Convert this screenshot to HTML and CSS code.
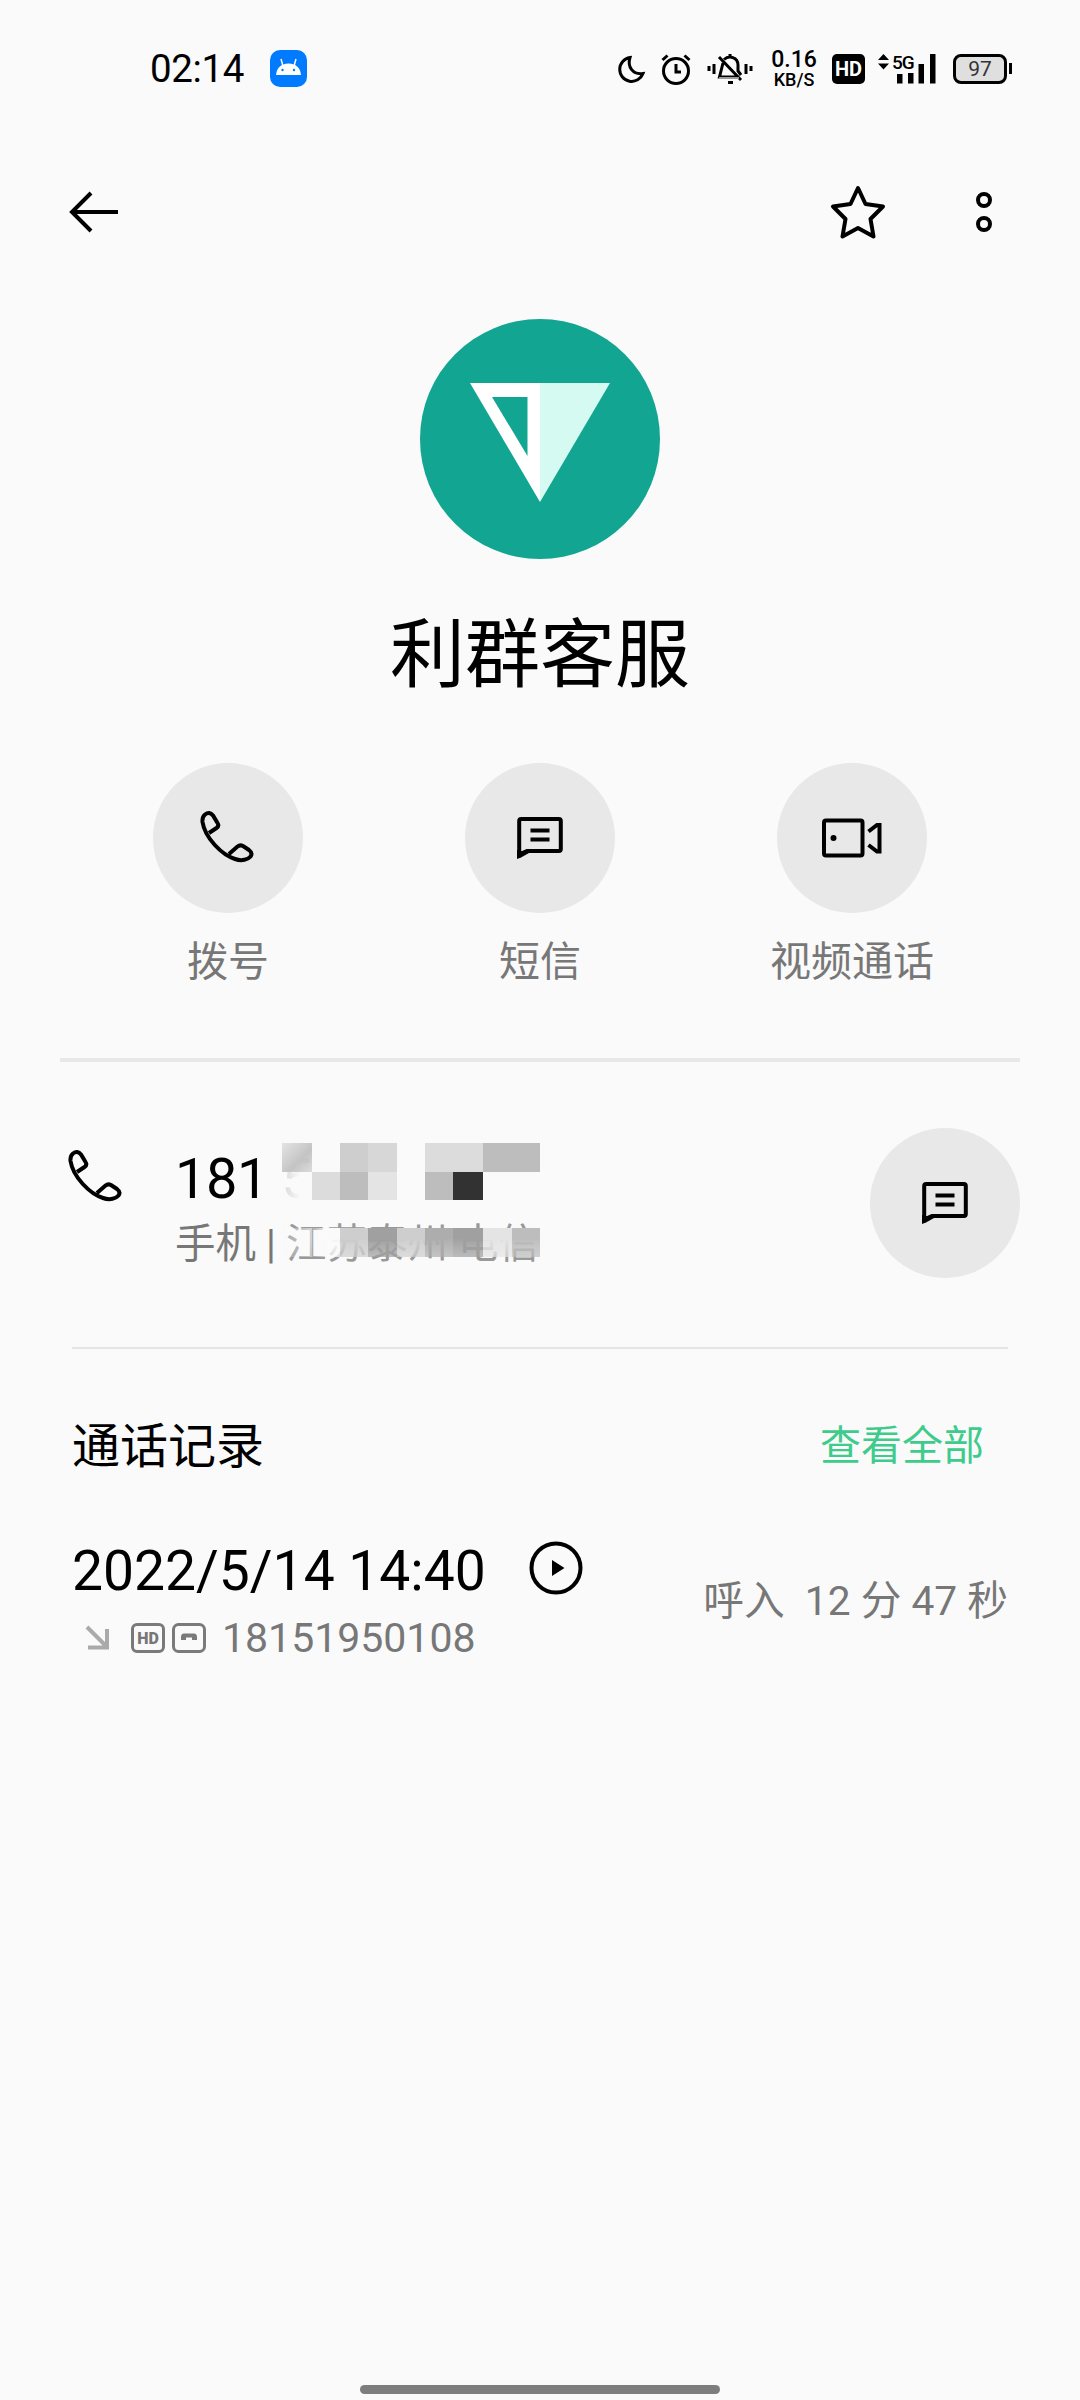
FILE: index.html
```html
<!DOCTYPE html>
<html lang="zh-CN">
<head>
    <meta charset="UTF-8">
    <meta name="viewport" content="width=device-width, initial-scale=1.0">
    <title>利群客服</title>
    <link rel="stylesheet" href="styles.css">
</head>
<body>
    <svg class="symbols">
        <symbol id="phone" viewBox="0 0 56 56">
            <path d="M9 23L16.500 18Q19.500 16 17.500 13L13 5.500Q9.500 1 5 4.500Q2 7 2.500 12C5 28 22 45 35 49C42 51.500 48 49.500 50.500 46.500Q53 43 49 40L43 36Q40 34.500 37.500 36.500L29 44"/>
        </symbol>
        <symbol id="message" viewBox="0 0 46 44">
            <path d="M2.200 38V5Q2.200 3 4.200 3H41.800Q43.800 3 43.800 5V33Q43.800 35 41.800 35H10L2.200 38.500M13.500 14.500H32.500M13.500 23.500H32.500"/>
            <path class="tail" d="M0 34V43L4 41.500L12 37Z"/>
        </symbol>
    </svg>

    <div class="status-bar">
        <span class="time">02:14</span>
        <svg class="app-icon" viewBox="0 0 37 37">
            <rect width="37" height="37" rx="10" fill="#007bff"/>
            <path d="M6 25Q7 14 18.500 13.500Q30 14 31 25Z" fill="#fff"/>
            <path d="M13 16L11 9M24 16L26 9" stroke="#fff" stroke-width="1.500"/>
            <circle cx="12.500" cy="20" r="1.200" fill="#007bff"/>
            <circle cx="24" cy="20" r="1.200" fill="#007bff"/>
        </svg>
        <div class="status-icons">
            <svg class="moon" viewBox="0 0 26 28">
                <path d="M11 2.500A12 12 0 1 0 24 18.500C14 20 8 12 11 2.500Z"/>
            </svg>
            <svg class="alarm" viewBox="0 0 30 32">
                <circle cx="15" cy="18" r="12.500"/>
                <path d="M15 11V19H20M1.500 7L6.500 2.500M28.500 7L23.500 2.500"/>
            </svg>
            <svg class="bell" viewBox="0 0 46 32">
                <path d="M2 13V18M7 11V21M39 11V21M44 13V18"/>
                <path d="M16 10L12.500 24H31M17 6.500C22 2 31 4 31 12V18L34 22M12 4L34 27M23 1V4M21 29.500H26"/>
                <path d="M12 25H32" stroke="#999" stroke-width="2"/>
            </svg>
            <div class="speed">
                <span class="speed-value">0.16</span>
                <span class="speed-unit">KB/S</span>
            </div>
            <span class="hd">HD</span>
            <svg class="signal" viewBox="0 0 58 30">
                <path d="M0 6L5.500 0L11 6ZM0 9.500L5.500 15.500L11 9.500Z"/>
                <text x="14" y="14.500">5G</text>
                <path d="M19 20H24.500V29.500H19ZM30 19H35.500V29.500H30ZM40.500 10H46V29.500H40.500ZM52 0H57.500V29.500H52Z"/>
            </svg>
            <div class="battery">97</div>
        </div>
    </div>

    <div class="toolbar">
        <svg class="back" viewBox="0 0 50 44">
            <path d="M22 3L3 22L22 41M3 22H49"/>
        </svg>
        <svg class="star" viewBox="0 0 56 56">
            <path d="M28 4L35.500 20L53 22.500L40.500 35L43.500 52.500L28 44L12.500 52.500L15.500 35L3 22.500L20.500 20Z"/>
        </svg>
        <svg class="more" viewBox="0 0 16 42">
            <circle cx="8" cy="9" r="6"/>
            <circle cx="8" cy="33" r="6"/>
        </svg>
    </div>

    <div class="profile">
        <svg class="avatar" viewBox="0 0 240 240">
            <circle cx="120" cy="120" r="120" fill="#12a591"/>
            <path d="M50 64H120V183Z" fill="#fff"/>
            <path d="M120 64H190L120 183Z" fill="#d5faf2"/>
            <path d="M72 78H107.500V137Z" fill="#12a591"/>
        </svg>
        <h1>利群客服</h1>
    </div>

    <div class="actions">
        <div class="action">
            <div class="circle"><svg class="icon-phone"><use href="#phone"/></svg></div>
            <span>拨号</span>
        </div>
        <div class="action">
            <div class="circle"><svg class="icon-message"><use href="#message"/></svg></div>
            <span>短信</span>
        </div>
        <div class="action">
            <div class="circle">
                <svg class="icon-video" viewBox="0 0 62 40">
                    <rect x="3" y="2.500" width="38.500" height="35" rx="2"/>
                    <path d="M47.500 13.500L56 7H58.500V33.500H56L47.500 27"/>
                    <circle class="dot" cx="12.500" cy="20" r="3"/>
                </svg>
            </div>
            <span>视频通话</span>
        </div>
    </div>

    <div class="number-row">
        <svg class="icon-phone"><use href="#phone"/></svg>
        <div class="number">
            <p class="digits">181 <span class="faint">5</span></p>
            <p class="place">手机 | <span class="fade">江苏泰州 电信</span></p>
            <div class="mosaic">
                <i class="t1"></i><i></i><i class="t2"></i><i class="t3"></i><i></i><i class="t4"></i><i class="t4"></i><i class="t5"></i><i class="t5"></i>
                <i class="t0"></i><i class="t4"></i><i class="t5"></i><i class="t6"></i><i></i><i class="t5"></i><i class="t7"></i><i></i><i></i>
            </div>
            <div class="mosaic low">
                <i class="t0"></i><i class="t0"></i><i class="t2"></i><i class="t8"></i><i class="t2"></i><i class="t9"></i><i class="t8"></i><i class="t6"></i><i class="t5"></i>
            </div>
        </div>
        <div class="circle"><svg class="icon-message"><use href="#message"/></svg></div>
    </div>

    <div class="history">
        <div class="history-head">
            <h2>通话记录</h2>
            <a>查看全部</a>
        </div>
        <div class="call">
            <div class="call-info">
                <div class="call-date">
                    <span>2022/5/14 14:40</span>
                    <svg class="play" viewBox="0 0 54 54">
                        <circle cx="27" cy="27" r="24.500"/>
                        <path d="M23 19L35.500 27L23 35Z"/>
                    </svg>
                </div>
                <div class="call-detail">
                    <svg class="incoming" viewBox="0 0 24 24">
                        <path d="M1 1L21 21M21 3V21.500H2"/>
                    </svg>
                    <span class="tag">HD</span>
                    <svg class="record" viewBox="0 0 34 30">
                        <rect x="1.500" y="1.500" width="31" height="27" rx="5"/>
                        <path class="fill" d="M9 17V14Q9 10.500 12 10.500H22Q25 10.500 25 14V17H20V14.500H14V17Z"/>
                    </svg>
                    <span>18151950108</span>
                </div>
            </div>
            <span class="duration">呼入  12 分 47 秒</span>
        </div>
    </div>

    <div class="home-bar"></div>
</body>
</html>
```
FILE: styles.css
```css
* {
    box-sizing: border-box;
}
body {
    margin: 0;
    width: 1080px;
    height: 2400px;
    display: flex;
    flex-direction: column;
    background: #fafafa;
    color: #000;
    font-family: Roboto, "Noto Sans CJK SC", sans-serif;
    overflow: hidden;
}
h1, h2, p {
    margin: 0;
    font-weight: 400;
}
svg {
    display: block;
    flex: none;
    fill: none;
    stroke: #000;
    stroke-width: 4;
    overflow: visible;
}
.symbols {
    position: absolute;
    width: 0;
    height: 0;
}
.tail {
    fill: #000;
    stroke: none;
}

/* status bar */
.status-bar {
    height: 137px;
    padding: 0 68px 0 150px;
    display: flex;
    align-items: center;
}
.time {
    width: 120px;
    font-size: 38.500px;
    letter-spacing: -0.4px;
}
.app-icon {
    width: 37px;
    height: 37px;
    stroke: none;
}
.status-icons {
    margin-left: auto;
    display: flex;
    align-items: center;
}
.moon {
    width: 26px;
    height: 28px;
    margin-right: 16px;
    stroke-width: 3;
}
.alarm {
    width: 30px;
    height: 32px;
    margin-right: 16px;
    stroke-width: 3;
}
.bell {
    width: 46px;
    height: 32px;
    margin-right: 18px;
    stroke-width: 3;
}
.speed {
    width: 46px;
    margin-right: 15px;
    display: flex;
    flex-direction: column;
    align-items: center;
    font-family: Roboto, sans-serif;
    font-weight: 500;
    white-space: nowrap;
}
.speed-value {
    font-size: 23px;
    line-height: 21px;
}
.speed-unit {
    font-size: 18px;
    line-height: 19px;
}
.hd {
    width: 33px;
    height: 30px;
    margin-right: 13px;
    border-radius: 5px;
    background: #000;
    color: #fff;
    font: 700 20px/31px Roboto, sans-serif;
    text-align: center;
}
.signal {
    width: 58px;
    height: 30px;
    margin-right: 17px;
    fill: #000;
    stroke: none;
    font: 500 19px Roboto, sans-serif;
    letter-spacing: -1px;
}
.battery {
    position: relative;
    width: 54px;
    height: 30px;
    margin-right: 5px;
    border: 3px solid #000;
    border-radius: 8px;
    background: #dfdfdf;
    color: #333;
    font-size: 21px;
    line-height: 25px;
    text-align: center;
}
.battery::after {
    content: "";
    position: absolute;
    right: -8px;
    top: 6px;
    width: 3px;
    height: 11px;
    background: #000;
}

/* toolbar */
.toolbar {
    height: 150px;
    padding: 0 88px 0 69px;
    display: flex;
    align-items: center;
}
.back {
    width: 50px;
    height: 44px;
}
.star {
    width: 56px;
    height: 56px;
    margin-left: auto;
    stroke-linejoin: round;
}
.more {
    width: 16px;
    height: 42px;
    margin-left: 90px;
}

/* profile */
.profile {
    padding-top: 32px;
    display: flex;
    flex-direction: column;
    align-items: center;
}
.avatar {
    width: 240px;
    height: 240px;
    stroke: none;
}
h1 {
    margin-top: 40px;
    font-size: 75px;
    line-height: 112px;
}

/* actions */
.actions {
    height: 295px;
    margin: 52px 72px 0;
    display: grid;
    grid-template-columns: repeat(3, 1fr);
}
.action {
    display: flex;
    flex-direction: column;
    align-items: center;
    color: #777;
    font-size: 41px;
    line-height: 60px;
}
.action span {
    margin-top: 19px;
}
.circle {
    flex: none;
    width: 150px;
    height: 150px;
    border-radius: 50%;
    background: #e8e8e8;
    display: flex;
    align-items: center;
    justify-content: center;
}
.icon-phone {
    width: 56px;
    height: 56px;
}
.icon-message {
    width: 46px;
    height: 44px;
}
.icon-video {
    width: 62px;
    height: 40px;
}
.icon-video .dot {
    fill: #000;
    stroke: none;
}

/* number */
.number-row {
    height: 289px;
    margin: 0 60px;
    padding: 66px 0 0 8px;
    display: flex;
    align-items: flex-start;
    border-top: 4px solid #e8e8e8;
}
.number-row .icon-phone {
    margin-top: 21px;
}
.number {
    position: relative;
    flex: 1;
    margin: 18px 0 0 51px;
}
.digits {
    font-size: 56px;
    line-height: 66px;
    letter-spacing: -0.5px;
}
.faint {
    color: #ccc;
}
.place {
    margin-top: 2px;
    color: #777;
    font-size: 40.500px;
    line-height: 60px;
    white-space: pre;
}
.fade {
    color: #999;
}
/* tiles that cover the private part of the number */
.mosaic {
    position: absolute;
    left: 107px;
    top: -3px;
    width: 258px;
    display: grid;
    grid-template-columns: 30px 28px 28px 29px 28px 28px 30px 29px 28px;
    grid-auto-rows: 28.500px;
}
.mosaic.low {
    top: 82px;
}
.mosaic.low i {
    -webkit-mask: linear-gradient(#000 35%, rgba(0, 0, 0, 0.7));
    mask: linear-gradient(#000 35%, rgba(0, 0, 0, 0.7));
}
.mosaic.low .t0:first-child {
    background: linear-gradient(90deg, rgba(250, 250, 250, 0.1), rgba(250, 250, 250, 0.6));
}
.t0 { background: linear-gradient(90deg, rgba(250, 250, 250, 0.2), #fafafa 60%); }
.t1 { background: linear-gradient(135deg, #e4e4e4, #c4c4c4 60%, rgba(200, 200, 200, 0.6)); }
.t2 { background: #cecece; }
.t3 { background: #d7d7d7; }
.t4 { background: #dcdcdc; }
.t5 { background: #bdbdbd; }
.t6 { background: #e4e4e4; }
.t7 { background: #323232; }
.t8 { background: #a0a0a0; }
.t9 { background: #adadad; }

/* history */
.history {
    margin: 0 72px;
    border-top: 2px solid #e4e4e4;
}
.history-head {
    height: 185px;
    padding-right: 24px;
    display: flex;
    align-items: center;
    justify-content: space-between;
}
h2 {
    font-size: 48px;
}
.history-head a {
    color: #3ecb8b;
    font-size: 41px;
}
.call {
    margin-top: 4px;
    display: flex;
    align-items: flex-start;
    justify-content: space-between;
}
.call-date {
    display: flex;
    align-items: center;
    height: 66px;
    font-size: 55.200px;
}
.play {
    width: 54px;
    height: 54px;
    margin: -6px 0 0 43px;
}
.play path {
    fill: #000;
    stroke: none;
}
.call-detail {
    height: 67px;
    padding-left: 14px;
    display: flex;
    align-items: center;
    color: #777;
    font-size: 41px;
}
.incoming {
    width: 24px;
    height: 24px;
    margin-right: 21px;
    stroke: #aaa;
}
.tag {
    width: 34px;
    height: 30px;
    margin-right: 7px;
    border: 3px solid #7a7a7a;
    border-radius: 6px;
    font-size: 16px;
    font-weight: 900;
    line-height: 25px;
    text-align: center;
}
.record {
    width: 34px;
    height: 30px;
    margin-right: 16px;
    stroke: #7a7a7a;
    stroke-width: 3;
}
.record .fill {
    fill: #7a7a7a;
    stroke: none;
}
.duration {
    margin-top: 31px;
    color: #777;
    font-size: 40.700px;
    line-height: 64px;
    white-space: pre;
}

.home-bar {
    width: 360px;
    height: 9px;
    margin: auto auto 6px;
    border-radius: 5px;
    background: #7d7d7d;
}
```
